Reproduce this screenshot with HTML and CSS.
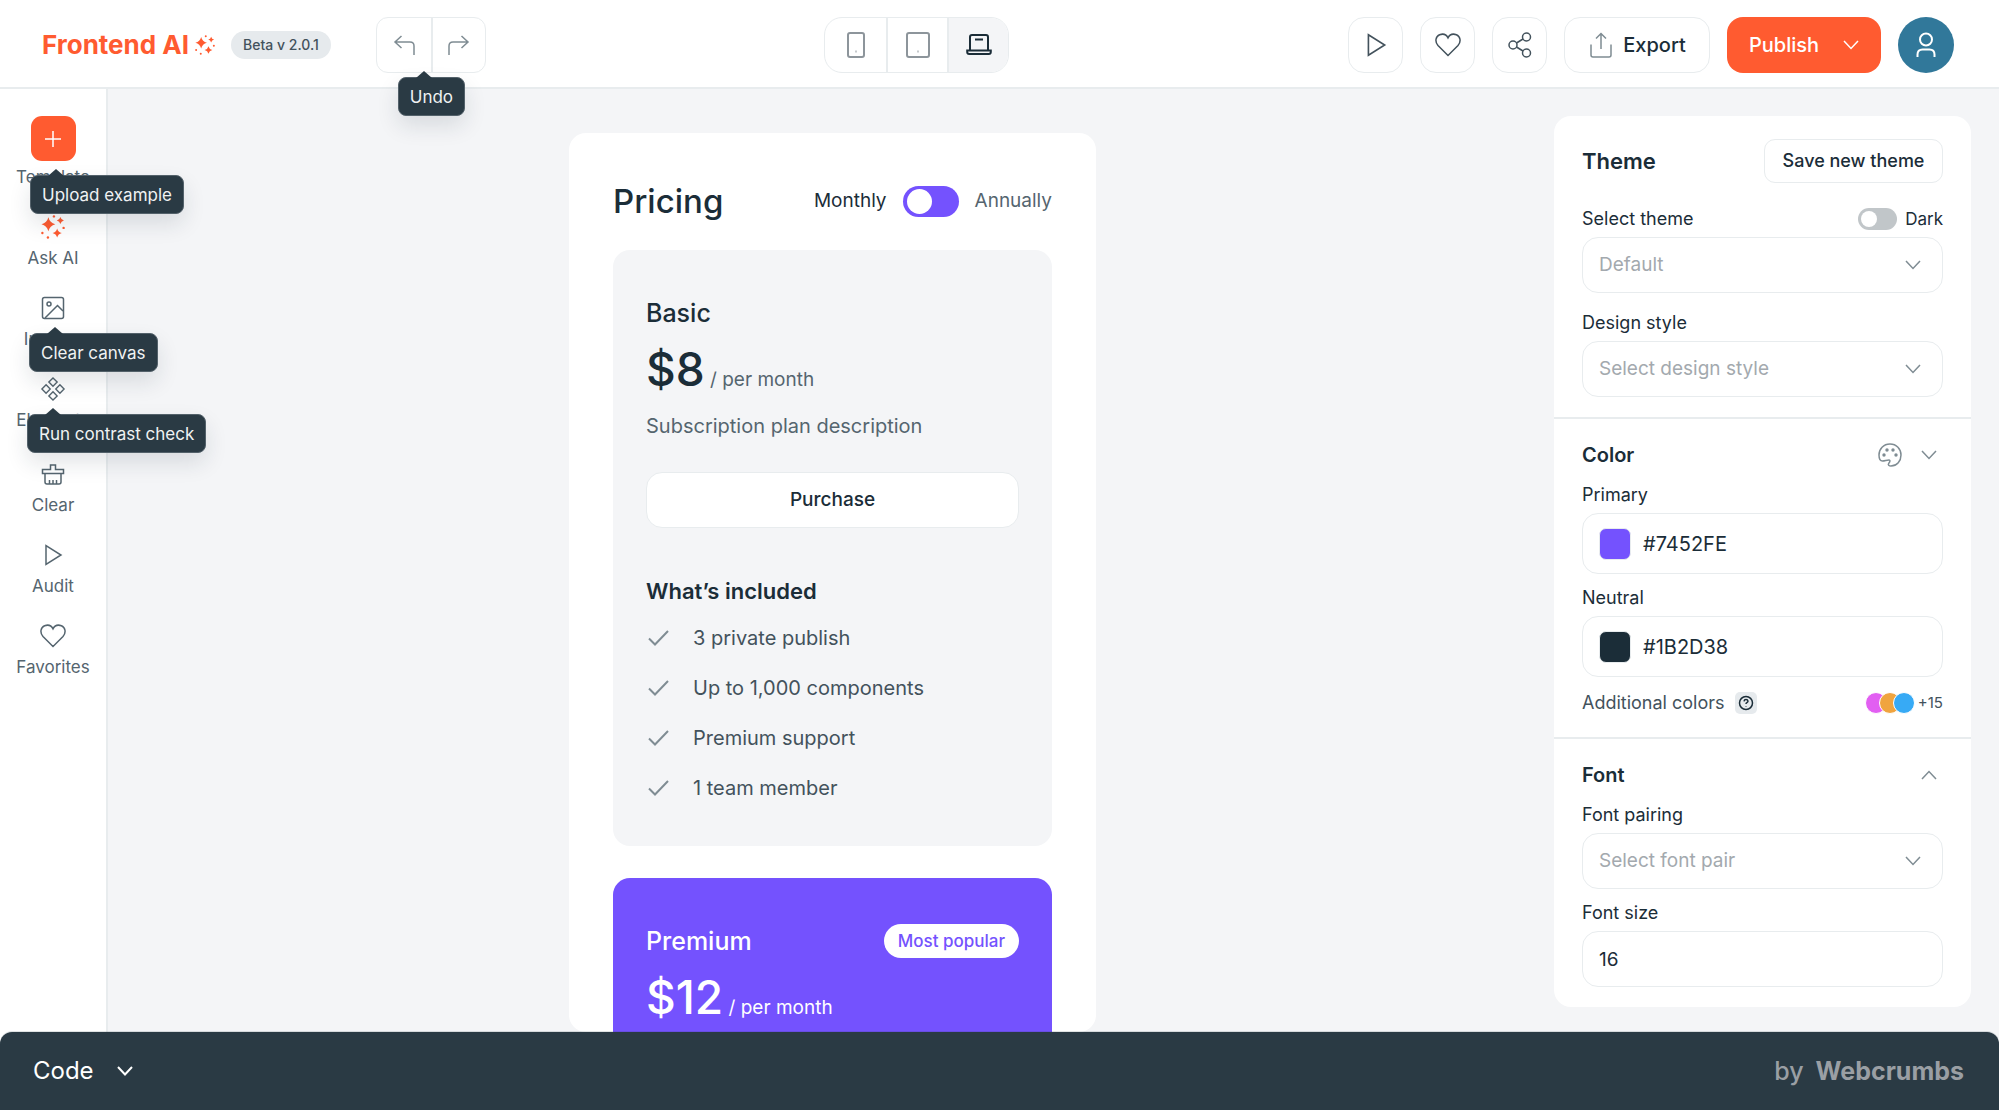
FILE: index.html
```html
<!DOCTYPE html>
<html lang="en">
<head>
<meta charset="utf-8">
<meta name="viewport" content="width=device-width, initial-scale=1">
<title>Frontend AI</title>
<link rel="stylesheet" href="styles.css">
</head>
<body>
<svg class="sprite" aria-hidden="true">
  <symbol id="i-sparkles" viewBox="0 0 26 26"><path fill="currentColor" d="M8 2.500Q9.500 8.500 15.500 10Q9.500 11.500 8 17.500Q6.500 11.500 .500 10Q6.500 8.500 8 2.500ZM21 2.200Q21.800 5.200 24.800 6Q21.800 6.800 21 9.800Q20.200 6.800 17.200 6Q20.200 5.200 21 2.200ZM17.500 14.500Q18.500 18.500 22.500 19.500Q18.500 20.500 17.500 24.500Q16.500 20.500 12.500 19.500Q16.500 18.500 17.500 14.500Z"/><g fill="currentColor"><circle cx="14" cy="1.500" r="1.300"/><circle cx="24.500" cy="14" r="1.300"/><circle cx="1.500" cy="19.500" r="1.300"/><circle cx="7.500" cy="24.300" r="1.300"/></g></symbol>
  <symbol id="i-play" viewBox="0 0 24 24"><path d="M5 2.500v19L20 12Z"/></symbol>
  <symbol id="i-heart" viewBox="0 0 26 24"><path d="M13 22.500 3 12.500C-.500 8.500.800 3.200 4.600 1.700 8 .500 11.300 1.500 13 4.800 14.700 1.500 18 .500 21.400 1.700c3.800 1.500 5.100 6.800 1.600 10.800Z"/></symbol>
  <symbol id="i-down" viewBox="0 0 16 16"><path d="m1 4 7 7.500L15 4"/></symbol>
  <symbol id="i-check" viewBox="0 0 22 18"><path d="m1.500 9.500 6 6L20.500 2"/></symbol>
</svg>

<header class="topbar">
  <div class="brand">
    <a class="logo" href="#">Frontend AI<svg class="logo-mark"><use href="#i-sparkles"/></svg></a>
    <span class="version">Beta v 2.0.1</span>
    <div class="group history">
      <button class="history-btn" aria-label="Undo"><svg class="ico" viewBox="0 0 24 24"><path d="M9.500 3 3 9l6.500 6M3 9h15q4 0 4 4v9"/></svg></button>
      <button class="history-btn" aria-label="Redo"><svg class="ico" viewBox="0 0 24 24"><path d="M14.500 3 21 9l-6.500 6M21 9H6q-4 0-4 4v9"/></svg></button>
      <span class="tip tip-undo" role="tooltip">Undo</span>
    </div>
  </div>
  <div class="group devices">
    <button class="device" aria-label="Phone"><svg class="ico-lg" viewBox="0 0 26 26"><rect x="5" y="1" width="16" height="24" rx="2"/><path d="M12.500 19.500h1"/></svg></button>
    <button class="device" aria-label="Tablet"><svg class="ico-lg" viewBox="0 0 26 26"><rect x="2" y="1" width="22" height="24" rx="2"/><path d="M12.500 19.500h1"/></svg></button>
    <button class="device active" aria-label="Laptop"><svg class="ico-lg" viewBox="0 0 26 26"><path d="M4 18V5q0-2 2-2h14q2 0 2 2v13M9 7.500h8"/><path d="M1.200 18.500h23.600v1.500q0 2-2 2H3.200q-2 0-2-2Z"/></svg></button>
  </div>
  <div class="actions">
    <button class="btn square" aria-label="Preview"><svg class="ico-lg"><use href="#i-play"/></svg></button>
    <button class="btn square" aria-label="Favorite"><svg class="ico-lg"><use href="#i-heart"/></svg></button>
    <button class="btn square" aria-label="Share"><svg class="ico-lg" viewBox="0 0 26 26"><circle cx="6" cy="13" r="4"/><circle cx="19.500" cy="5" r="4"/><circle cx="19.500" cy="21" r="4"/><path d="m9.500 11 6.500-4M9.500 15l6.500 4"/></svg></button>
    <button class="btn export"><svg class="ico-lg soft" viewBox="0 0 26 26"><path d="M13 17V1.500M8 6.500l5-5 5 5M3 12.500V23q0 2 2 2h16q2 0 2-2V12.500"/></svg>Export</button>
    <button class="btn publish">Publish<svg class="chev"><use href="#i-down"/></svg></button>
    <button class="avatar" aria-label="Account"><svg class="ico-lg" viewBox="0 0 26 26"><circle cx="13" cy="7.500" r="6"/><path d="M4.500 25v-2.500q0-5 5-5h7q5 0 5 5V25"/></svg></button>
  </div>
</header>

<div class="workspace">
  <nav class="rail" aria-label="Tools">
    <div class="rail-set">
      <a class="tool tool-new" href="#"><span class="plus"><svg class="chev" viewBox="0 0 16 16"><path d="M8 0v16M0 8h16"/></svg></span>Template<span class="tip tip-upload" role="tooltip">Upload example</span></a>
      <a class="tool" href="#"><svg class="ico-lg hot"><use href="#i-sparkles"/></svg>Ask AI</a>
      <a class="tool" href="#"><svg class="ico" viewBox="0 0 24 24"><rect x="1.500" y="1.500" width="21" height="21" rx="2"/><circle cx="8" cy="8" r="2"/><path d="m4 22 12.500-12.500L22 15"/></svg>Images<span class="tip tip-clear" role="tooltip">Clear canvas</span></a>
      <a class="tool" href="#"><svg class="ico-lg" viewBox="0 0 26 26"><path d="m13 1 4.500 4.500L13 10 8.500 5.500ZM13 16l4.500 4.500L13 25l-4.500-4.500ZM5.500 8.500 10 13l-4.500 4.500L1 13ZM20.500 8.500 25 13l-4.500 4.500L16 13Z"/></svg>Elements<span class="tip tip-contrast" role="tooltip">Run contrast check</span></a>
    </div>
    <div class="rail-set">
      <a class="tool" href="#"><svg class="ico" viewBox="0 0 24 24"><path d="M1.500 7.500h8V3h5v4.500h8v4h-21ZM4 11.500V20q0 2 2 2h12q2 0 2-2v-8.500M8.500 22v-4M12 22v-4M15.500 22v-4"/></svg>Clear</a>
      <a class="tool" href="#"><svg class="ico"><use href="#i-play"/></svg>Audit</a>
      <a class="tool" href="#"><svg class="ico-lg"><use href="#i-heart"/></svg>Favorites</a>
    </div>
  </nav>

  <main class="canvas">
    <section class="preview">
      <div class="preview-head">
        <h1>Pricing</h1>
        <label class="billing"><span class="on">Monthly</span><input class="switch" type="checkbox" role="switch"><span>Annually</span></label>
      </div>
      <article class="plan">
        <div class="plan-head"><h2>Basic</h2></div>
        <p class="price"><strong>$8</strong> / per month</p>
        <p class="desc">Subscription plan description</p>
        <button class="btn purchase">Purchase</button>
        <h3>What’s included</h3>
        <ul class="features">
          <li><svg class="tick"><use href="#i-check"/></svg>3 private publish</li>
          <li><svg class="tick"><use href="#i-check"/></svg>Up to 1,000 components</li>
          <li><svg class="tick"><use href="#i-check"/></svg>Premium support</li>
          <li><svg class="tick"><use href="#i-check"/></svg>1 team member</li>
        </ul>
      </article>
      <article class="plan premium">
        <div class="plan-head"><h2>Premium</h2><span class="popular">Most popular</span></div>
        <p class="price"><strong>$12</strong> / per month</p>
      </article>
    </section>
  </main>

  <aside class="inspector">
    <section class="block block-theme">
      <div class="block-head"><h2 class="title">Theme</h2><button class="btn save">Save new theme</button></div>
      <div class="field">
        <div class="label-row"><label for="theme">Select theme</label><label class="dark"><input class="switch small" type="checkbox" role="switch">Dark</label></div>
        <div class="picker"><select id="theme"><option>Default</option></select><svg class="chev"><use href="#i-down"/></svg></div>
      </div>
      <div class="field">
        <label for="style">Design style</label>
        <div class="picker"><select id="style"><option>Select design style</option></select><svg class="chev"><use href="#i-down"/></svg></div>
      </div>
    </section>
    <section class="block">
      <div class="block-head"><h3 class="subtitle">Color</h3><div class="tools"><button class="icon-btn" aria-label="Palette"><svg class="ico" viewBox="0 0 24 24"><path d="M12 1C5.500 1 1 6 1 12c0 4 1.500 6 3.500 6 2.500 0 4-1 6.500-1 1.500 0 1 2-.200 3.200C9.500 22 11 23 13 23c6 0 10-5 10-11S18.500 1 12 1Z"/><g class="dot"><circle cx="9" cy="7" r="1.700"/><circle cx="15" cy="7" r="1.700"/><circle cx="6" cy="12" r="1.700"/><circle cx="18" cy="12" r="1.700"/></g></svg></button><button class="icon-btn" aria-label="Expand color"><svg class="chev"><use href="#i-down"/></svg></button></div></div>
      <div class="field">
        <label for="primary">Primary</label>
        <div class="color"><span class="swatch violet"></span><input id="primary" type="text" value="#7452FE"></div>
      </div>
      <div class="field">
        <label for="neutral">Neutral</label>
        <div class="color"><span class="swatch ink"></span><input id="neutral" type="text" value="#1B2D38"></div>
      </div>
      <div class="extra">
        <span>Additional colors</span>
        <button class="help" aria-label="Help"><svg class="chev" viewBox="0 0 16 16"><circle cx="8" cy="8" r="6.500"/><path d="M6 6.300q.300-1.800 2-1.800t2 1.600q0 1-1.100 1.600-.900.500-.900 1.200M8 11v.400"/></svg></button>
        <span class="dots"><i class="pink"></i><i class="amber"></i><i class="sky"></i></span><span class="more">+15</span>
      </div>
    </section>
    <section class="block">
      <div class="block-head"><h3 class="subtitle">Font</h3><div class="tools"><button class="icon-btn" aria-label="Collapse font"><svg class="chev" viewBox="0 0 16 16"><path d="M1 12 8 4.500 15 12"/></svg></button></div></div>
      <div class="field">
        <label for="pair">Font pairing</label>
        <div class="picker"><select id="pair"><option>Select font pair</option></select><svg class="chev"><use href="#i-down"/></svg></div>
      </div>
      <div class="field">
        <label for="size">Font size</label>
        <input class="box" id="size" type="text" value="16">
      </div>
    </section>
  </aside>
</div>

<footer class="codebar">
  <button class="code">Code<svg class="chev"><use href="#i-down"/></svg></button>
  <span class="credit">by <a href="#">Webcrumbs</a></span>
</footer>
</body>
</html>
```

FILE: styles.css
```css
:root {
  --ink: #1b2d38;
  --slate: #55656f;
  --soft: #7f8c93;
  --line: #e8ecee;
  --ground: #f4f5f7;
  --dark: #2a3a44;
  --orange: #ff5b30;
  --violet: #7452fe;
}

* { box-sizing: border-box; }

body {
  margin: 0;
  height: 100vh;
  display: flex;
  flex-direction: column;
  overflow: hidden;
  font: 400 18px/24px Inter, "Liberation Sans", sans-serif;
  color: var(--ink);
  background: var(--ground);
}

h1, h2, h3, p, ul { margin: 0; padding: 0; }
button, input, select { font: inherit; color: inherit; margin: 0; }
button { padding: 0; border: 0; background: none; cursor: pointer; }
a { color: inherit; text-decoration: none; }

.sprite { position: absolute; width: 0; height: 0; }
svg { flex: none; fill: none; stroke: currentColor; stroke-width: 1.5; overflow: visible; }
#i-sparkles { stroke: none; }
.ico { width: 24px; height: 24px; }
.ico-lg { width: 26px; height: 26px; }
.chev { width: 16px; height: 16px; }
.dot { fill: currentColor; stroke: none; }

/* top bar */
.topbar {
  display: flex;
  justify-content: space-between;
  align-items: center;
  height: 89px;
  flex: none;
  padding: 2px 45px 0 42px;
  background: #fff;
  border-bottom: 2px solid var(--line);
}
.brand { display: flex; align-items: center; }
.logo { display: flex; align-items: center; gap: 6px; font-size: 26px; font-weight: 700; color: var(--orange); white-space: nowrap; }
.logo-mark { width: 20px; height: 20px; }
.version { margin-left: 16px; padding: 2px 12px; border-radius: 14px; background: #e6eaed; color: #43525c; font-size: 14px; font-weight: 500; white-space: nowrap; }
.group { display: flex; height: 56px; border: 1px solid var(--line); }
.history { position: relative; margin-left: 45px; border-radius: 12px; color: var(--soft); }
.history-btn { width: 54px; display: grid; place-items: center; }
.history-btn + .history-btn, .device + .device { border-left: 2px solid var(--line); }
.devices { border-radius: 18px; overflow: hidden; color: #8d959b; }
.device { width: 61px; display: grid; place-items: center; }
.device.active { background: var(--ground); color: var(--ink); }
.device svg { stroke-width: 2; }
.actions { display: flex; justify-content: flex-end; gap: 17px; }
.btn { border: 1px solid var(--line); border-radius: 16px; height: 56px; background: #fff; font-size: 20px; font-weight: 500; color: var(--ink); display: flex; align-items: center; justify-content: center; white-space: nowrap; }
.square { width: 55px; color: #43525c; }
.export { width: 146px; gap: 9px; }
.publish { width: 154px; gap: 24px; border: 0; background: var(--orange); color: #fff; }
.soft { color: var(--soft); }
.avatar { width: 56px; height: 56px; border-radius: 50%; background: #31789a; color: #fff; display: grid; place-items: center; }
.avatar svg { stroke-width: 2; }

/* tooltips */
.tip {
  position: absolute;
  z-index: 3;
  height: 39px;
  padding: 7px 11px;
  border: 1px solid #53616a;
  border-radius: 8px;
  background: var(--dark);
  color: #f0f2f3;
  font-size: 17px;
  line-height: 24px;
  white-space: nowrap;
  box-shadow: 0 10px 22px rgba(27, 45, 56, .12);
}
.tip::before {
  content: "";
  position: absolute;
  top: -7px;
  left: 17px;
  border: 8px solid transparent;
  border-top: 0;
  border-bottom: 7px solid var(--dark);
}
.tip-undo { top: 59px; left: 21px; }
.tip-upload { top: 59px; left: 30px; }
.tip-clear { top: 37px; left: 29px; }
.tip-contrast { top: 37px; left: 27px; }

/* workspace */
.workspace { flex: 1; min-height: 0; display: flex; margin-bottom: -12px; }
.rail { width: 108px; flex: none; display: flex; flex-direction: column; gap: 31px; padding-top: 27px; background: #fff; border-right: 2px solid var(--line); }
.rail-set { display: flex; flex-direction: column; gap: 27px; }
.tool { position: relative; display: flex; flex-direction: column; align-items: center; gap: 8px; font-size: 17px; line-height: 22px; color: var(--slate); }
.tool svg { height: 24px; }
.tool-new { gap: 5px; }
.plus { width: 45px; height: 45px; border-radius: 11px; background: var(--orange); color: #fff; display: grid; place-items: center; }
.tool .plus svg { height: 16px; }
.hot { color: var(--orange); }

.canvas { flex: 1; display: flex; justify-content: center; padding: 44px 0 12px 3px; }
.preview { width: 527px; display: flex; flex-direction: column; padding: 0 44px; background: #fff; border-radius: 17px; overflow: hidden; }
.preview-head { display: flex; align-items: center; justify-content: space-between; padding: 48px 0 29px; }
h1 { font-size: 33px; line-height: 40px; font-weight: 500; }
.billing { display: flex; align-items: center; gap: 16px; font-size: 19px; color: var(--slate); }
.on { color: var(--ink); }
.switch { appearance: none; width: 56px; height: 31px; padding: 3px 4px; border-radius: 16px; background: var(--violet); }
.switch::before { content: ""; display: block; width: 25px; height: 25px; border-radius: 50%; background: #fff; }
.switch.small { width: 39px; height: 22px; padding: 3px; background: #c1c6c9; }
.switch.small::before { width: 16px; height: 16px; }

.plan { flex: none; padding: 45px 33px 33px; border-radius: 17px; background: var(--ground); }
.plan-head { display: flex; align-items: center; justify-content: space-between; height: 36px; }
.plan h2 { font-size: 25px; line-height: 36px; font-weight: 500; }
.price { margin-top: 8px; font-size: 19px; line-height: 60px; color: var(--slate); }
.price strong { font-size: 46px; font-weight: 500; color: var(--ink); }
.desc { margin-top: 4px; font-size: 20px; color: var(--slate); }
.purchase { width: 100%; margin: 34px 0 45px; font-size: 19px; }
.plan h3 { font-size: 22px; line-height: 36px; font-weight: 600; }
.features { list-style: none; margin-top: 4px; }
.features li { display: flex; align-items: center; gap: 22px; height: 50px; font-size: 20px; color: #43525c; }
.tick { width: 25px; height: 18px; color: var(--soft); stroke-width: 2; }
.premium { flex: 1; margin-top: 32px; border-radius: 17px 17px 0 0; background: var(--violet); }
.premium h2, .premium strong, .premium .price { color: #fff; }
.popular { padding: 5px 14px; border-radius: 18px; background: #fff; color: var(--violet); font-size: 17px; font-weight: 500; }

/* inspector */
.inspector { width: 417px; flex: none; align-self: flex-start; margin: 27px 28px 0 0; background: #fff; border-radius: 17px; }
.block { padding: 20px 28px; display: flex; flex-direction: column; gap: 12px; }
.block + .block { border-top: 2px solid var(--line); }
.block-theme { padding-top: 23px; gap: 18px; }
.block-head { display: flex; align-items: center; justify-content: space-between; min-height: 32px; }
.block-theme .block-head { margin-bottom: 6px; }
.title { font-size: 22px; line-height: 28px; font-weight: 600; }
.subtitle { font-size: 20px; line-height: 32px; font-weight: 600; }
.save { width: 179px; height: 44px; border-radius: 11px; font-size: 18px; }
.field { display: flex; flex-direction: column; gap: 6px; }
.field label { font-size: 18px; line-height: 24px; }
.label-row { display: flex; justify-content: space-between; }
.label-row .dark { display: flex; align-items: center; gap: 8px; font-size: 17px; }
.picker { position: relative; }
.picker svg { position: absolute; right: 22px; top: 20px; color: var(--soft); pointer-events: none; }
select, .box { width: 100%; height: 56px; padding: 0 16px; border: 1px solid var(--line); border-radius: 16px; background: #fff; font-size: 19px; appearance: none; display: block; }
select { color: #a3a9ae; }
.color { display: flex; align-items: center; gap: 12px; height: 61px; padding: 0 16px; border: 1px solid var(--line); border-radius: 16px; }
.color input { flex: 1; min-width: 0; border: 0; padding: 0; font-size: 20px; background: none; }
.swatch { width: 32px; height: 32px; border-radius: 7px; border: 1px solid var(--line); }
.violet { background: var(--violet); }
.ink { background: var(--ink); }
.tools { display: flex; align-items: center; gap: 19px; padding-right: 6px; color: var(--soft); }
.icon-btn { display: grid; }
.extra { display: flex; align-items: center; height: 28px; color: #43525c; }
.help { width: 22px; height: 22px; margin-left: 10px; border-radius: 5px; background: #e6eaed; color: var(--ink); display: grid; place-items: center; }
.dots { display: flex; margin-left: auto; margin-right: 3px; }
.dots i { width: 22px; height: 22px; border: 1px solid #fff; border-radius: 50%; }
.dots i + i { margin-left: -8px; }
.pink { background: #e25ff2; }
.amber { background: #f0a43f; }
.sky { background: #37aaf5; }
.more { font-size: 15px; }

/* footer */
.codebar { position: relative; z-index: 4; flex: none; height: 78px; display: flex; align-items: center; justify-content: space-between; padding: 0 35px 0 33px; border-radius: 12px 12px 0 0; background: var(--dark); box-shadow: 0 -1px 0 rgba(42, 58, 68, .15); }
.code { display: flex; align-items: center; gap: 23px; color: #fff; font-size: 24px; }
.code svg { stroke-width: 2; }
.credit { display: flex; gap: 12px; color: #9a9fa4; font-size: 25px; font-weight: 500; }
.credit a { font-weight: 700; }
```
